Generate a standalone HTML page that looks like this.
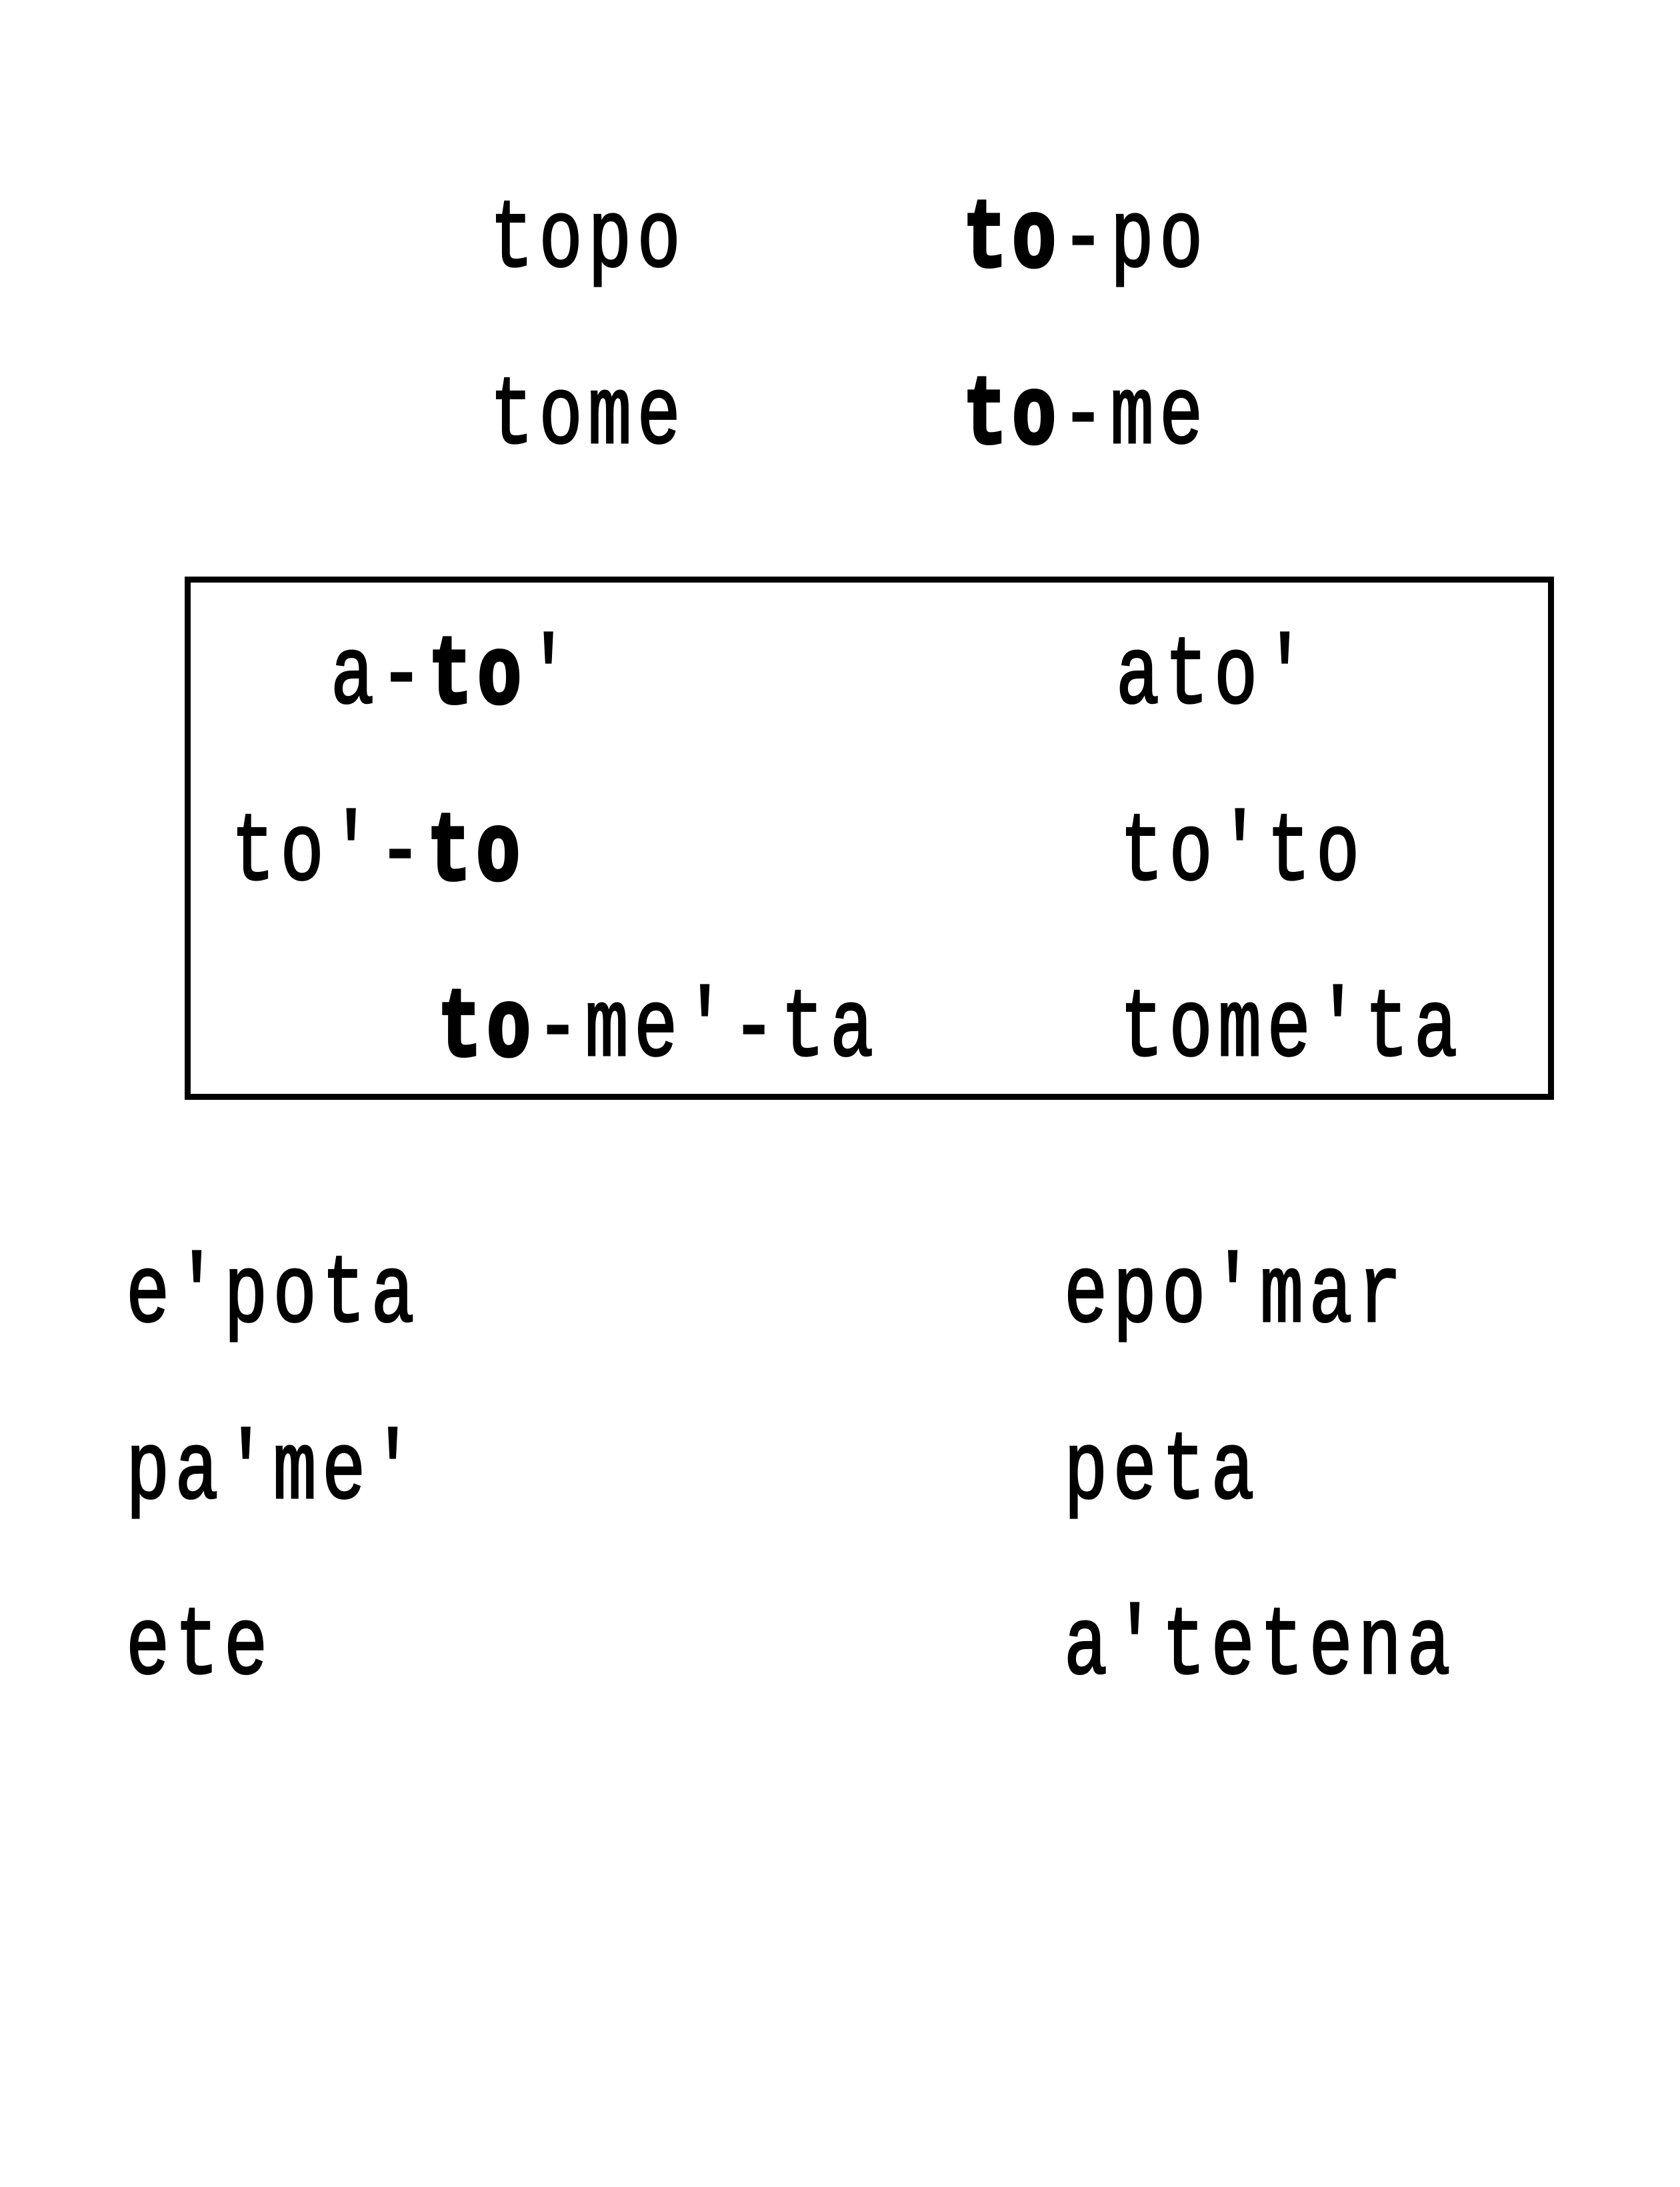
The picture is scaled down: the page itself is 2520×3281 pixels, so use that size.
<!DOCTYPE html>
<html><head><meta charset="utf-8"><style>
html,body{margin:0;padding:0;background:#fff;}
body{width:2520px;height:3281px;position:relative;overflow:hidden;}
.t{position:absolute;font-family:"Liberation Mono",monospace;font-size:145px;line-height:145px;letter-spacing:11px;color:#000;white-space:pre;transform:scaleX(0.75);transform-origin:0 0;-webkit-text-stroke:3px #000;}
b{font-weight:bold;-webkit-text-stroke:6px #000;}
.box{position:absolute;left:277px;top:865px;width:2054px;height:785px;border:9px solid #000;box-sizing:border-box;}
</style></head><body>
<div class="t" style="left:735px;top:288px">topo</div>
<div class="t" style="left:1445px;top:288px"><b>to</b>-po</div>
<div class="t" style="left:735px;top:553px">tome</div>
<div class="t" style="left:1445px;top:553px"><b>to</b>-me</div>
<div class="box"></div>
<div class="t" style="left:496px;top:943px">a-<b>to</b>'</div>
<div class="t" style="left:1674px;top:943px">ato'</div>
<div class="t" style="left:347px;top:1208px">to'-<b>to</b></div>
<div class="t" style="left:1680px;top:1208px">to'to</div>
<div class="t" style="left:657px;top:1472px"><b>to</b>-me'-ta</div>
<div class="t" style="left:1680px;top:1472px">tome'ta</div>
<div class="t" style="left:189px;top:1871px">e'pota</div>
<div class="t" style="left:1596px;top:1871px">epo'mar</div>
<div class="t" style="left:189px;top:2136px">pa'me'</div>
<div class="t" style="left:1596px;top:2136px">peta</div>
<div class="t" style="left:189px;top:2399px">ete</div>
<div class="t" style="left:1596px;top:2399px">a'tetena</div>
</body></html>
